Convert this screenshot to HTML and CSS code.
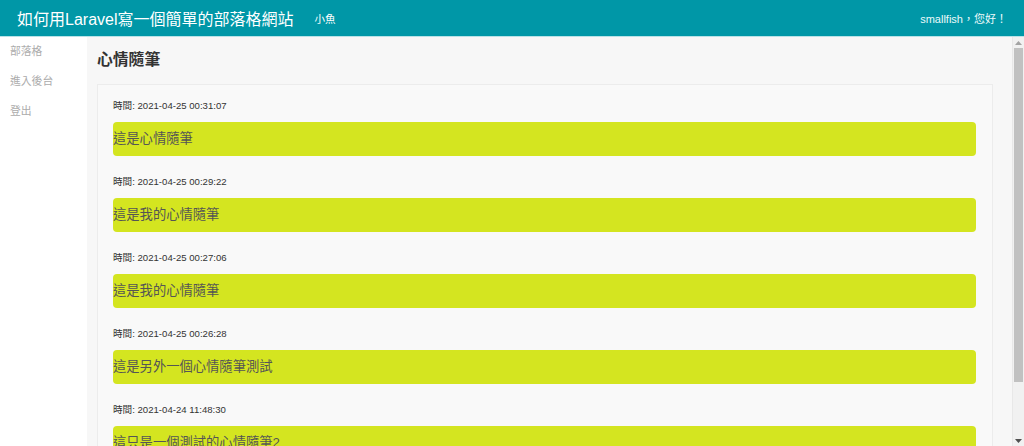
FILE: index.html
```html
<!DOCTYPE html>
<html lang="zh-Hant">
<head>
    <meta charset="UTF-8">
    <meta name="viewport" content="width=device-width, initial-scale=1.0">
    <title>心情隨筆</title>
    <link rel="stylesheet" href="styles.css">
</head>
<body>
    <div class="top-bar">
        <div class="top-left">
            <span class="site-title">如何用Laravel寫一個簡單的部落格網站</span>
            <span class="site-sub">小魚</span>
        </div>
        <div class="top-user">smallfish，您好！</div>
    </div>
    <div class="page-wrap">
        <ul class="side-nav">
            <li><a href="javascript:;">部落格</a></li>
            <li><a href="javascript:;">進入後台</a></li>
            <li><a href="javascript:;">登出</a></li>
        </ul>
        <div class="main">
            <h2 class="main-title">心情隨筆</h2>
            <div class="note-box">
                <div class="note-item">
                    <p class="note-time">時間: 2021-04-25 00:31:07</p>
                    <div class="note-text">這是心情隨筆</div>
                </div>
                <div class="note-item">
                    <p class="note-time">時間: 2021-04-25 00:29:22</p>
                    <div class="note-text">這是我的心情隨筆</div>
                </div>
                <div class="note-item">
                    <p class="note-time">時間: 2021-04-25 00:27:06</p>
                    <div class="note-text">這是我的心情隨筆</div>
                </div>
                <div class="note-item">
                    <p class="note-time">時間: 2021-04-25 00:26:28</p>
                    <div class="note-text">這是另外一個心情隨筆測試</div>
                </div>
                <div class="note-item">
                    <p class="note-time">時間: 2021-04-24 11:48:30</p>
                    <div class="note-text">這只是一個測試的心情隨筆2</div>
                </div>
            </div>
        </div>
        <div class="scroll-bar">
            <div class="scroll-btn">
                <svg width="7" height="4" viewBox="0 0 7 4"><path d="M0 4 L3.5 0 L7 4 Z" fill="#a3a3a3"/></svg>
            </div>
            <div class="scroll-track">
                <div class="scroll-thumb"></div>
            </div>
            <div class="scroll-btn">
                <svg width="7" height="4" viewBox="0 0 7 4"><path d="M0 0 L7 0 L3.5 4 Z" fill="#505050"/></svg>
            </div>
        </div>
    </div>
</body>
</html>
```

FILE: styles.css
```css
*{
    margin: 0;
    padding: 0;
    box-sizing: border-box;
}
html, body{
    height: 100%;
}
body{
    display: flex;
    flex-direction: column;
    overflow: hidden;
    font-family: "Liberation Sans", "Noto Sans CJK TC", sans-serif;
    background-color: #f7f7f7;
}
.top-bar{
    height: 37px;
    flex: none;
    display: flex;
    align-items: center;
    justify-content: space-between;
    padding: 0 17px 0 17px;
    background-color: #0097a7;
    border-bottom: 1px solid #b9e2e7;
    color: #fff;
}
.top-left{
    display: flex;
    align-items: center;
}
.site-title{
    font-size: 16px;
}
.site-sub{
    font-size: 10.5px;
    margin-left: 21px;
}
.top-user{
    font-size: 11px;
    color: #eafafb;
}
.page-wrap{
    flex: 1;
    display: flex;
    overflow: hidden;
}
.side-nav{
    width: 87px;
    flex: none;
    list-style: none;
    padding-top: 5px;
    background-color: #fff;
}
.side-nav li{
    height: 30px;
    line-height: 16px;
    padding-left: 10px;
}
.side-nav a{
    font-size: 10.8px;
    color: #acacac;
    text-decoration: none;
}
.main{
    flex: 1;
    min-width: 0;
    padding: 12px 19px 12px 10px;
}
.main-title{
    font-size: 15.8px;
    line-height: 22px;
    color: #333;
    margin-bottom: 13px;
}
.note-box{
    border: 1px solid #ececec;
    background-color: #f9f9f9;
    padding: 15px 16px 16px 15px;
}
.note-time{
    font-size: 9.6px;
    line-height: 12px;
    color: #333;
    margin-bottom: 10px;
}
.note-text{
    height: 34px;
    line-height: 34px;
    font-size: 13.3px;
    color: #555;
    background-color: #d4e520;
    border-radius: 4px;
    margin-bottom: 20px;
}
.scroll-bar{
    width: 12px;
    flex: none;
    display: flex;
    flex-direction: column;
    background-color: #f1f1f1;
    border-left: 1px solid #e8e8e8;
}
.scroll-btn{
    height: 11px;
    display: flex;
    align-items: center;
    justify-content: center;
}
.scroll-track{
    flex: 1;
    padding: 0 1px 0 1px;
}
.scroll-thumb{
    height: 334px;
    background-color: #c1c1c1;
}
```
